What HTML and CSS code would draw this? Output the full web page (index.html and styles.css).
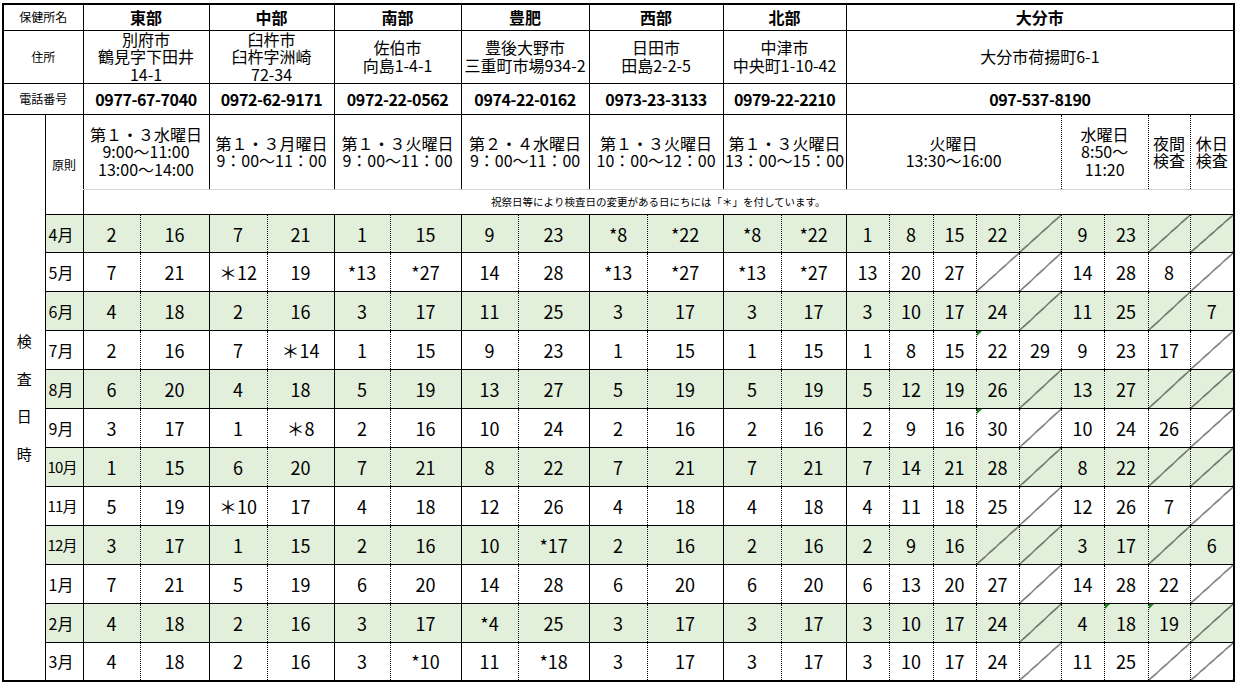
FILE: index.html
```html
<!DOCTYPE html>
<html lang="ja">
<head>
<meta charset="utf-8">
<title>検査日時</title>
<link rel="stylesheet" href="styles.css">
</head>
<body>
<table class="sched">
<colgroup>
<col class="c42"><col class="c38">
<col class="c57"><col class="c69">
<col class="c58"><col class="c67">
<col class="c56"><col class="c71">
<col class="c57"><col class="c71">
<col class="c58"><col class="c76">
<col class="c58"><col class="c65">
<col class="c43"><col class="c44"><col class="c43"><col class="c43"><col class="c42"><col class="c43"><col class="c44"><col class="c42"><col class="c44">
</colgroup>
<tr class="r1">
<th colspan="2" class="lbl">保健所名</th>
<th colspan="2" class="name">東部</th>
<th colspan="2" class="name">中部</th>
<th colspan="2" class="name">南部</th>
<th colspan="2" class="name">豊肥</th>
<th colspan="2" class="name">西部</th>
<th colspan="2" class="name">北部</th>
<th colspan="9" class="name">大分市</th>
</tr>
<tr class="r2">
<th colspan="2" class="lbl">住所</th>
<td colspan="2" class="addr">別府市<br>鶴見字下田井<br>14-1</td>
<td colspan="2" class="addr">臼杵市<br>臼杵字洲崎<br>72-34</td>
<td colspan="2" class="addr">佐伯市<br>向島1-4-1</td>
<td colspan="2" class="addr">豊後大野市<br>三重町市場934-2</td>
<td colspan="2" class="addr">日田市<br>田島2-2-5</td>
<td colspan="2" class="addr">中津市<br>中央町1-10-42</td>
<td colspan="9" class="addr">大分市荷揚町6-1</td>
</tr>
<tr class="r3">
<th colspan="2" class="lbl">電話番号</th>
<td colspan="2" class="tel">0977-67-7040</td>
<td colspan="2" class="tel">0972-62-9171</td>
<td colspan="2" class="tel">0972-22-0562</td>
<td colspan="2" class="tel">0974-22-0162</td>
<td colspan="2" class="tel">0973-23-3133</td>
<td colspan="2" class="tel">0979-22-2210</td>
<td colspan="9" class="tel">097-537-8190</td>
</tr>
<tr class="r4">
<td rowspan="14" class="vert">検<br>査<br>日<br>時</td>
<td rowspan="2" class="gen">原則</td>
<td colspan="2" class="rule">第１・３水曜日<br>9:00～11:00<br>13:00～14:00</td>
<td colspan="2" class="rule">第１・３月曜日<br>9：00～11：00</td>
<td colspan="2" class="rule">第１・３火曜日<br>9：00～11：00</td>
<td colspan="2" class="rule">第２・４水曜日<br>9：00～11：00</td>
<td colspan="2" class="rule">第１・３火曜日<br>10：00～12：00</td>
<td colspan="2" class="rule">第１・３火曜日<br>13：00～15：00</td>
<td colspan="5" class="rule">火曜日<br>13:30～16:00</td>
<td colspan="2" class="rule d">水曜日<br>8:50～<br>11:20</td>
<td class="rule d">夜間<br>検査</td>
<td class="rule d">休日<br>検査</td>
</tr>
<tr class="r5">
<td colspan="21" class="note">祝祭日等により検査日の変更がある日にちには「＊」を付しています。</td>
</tr>
<tr class="m g first">
<td class="mon">4月</td>
<td>2</td><td class="d">16</td><td>7</td><td class="d">21</td><td>1</td><td class="d">15</td><td>9</td><td class="d">23</td><td>*8</td><td class="d">*22</td><td>*8</td><td class="d">*22</td>
<td>1</td><td class="d">8</td><td class="d">15</td><td class="d">22</td><td class="d x"></td><td class="d">9</td><td class="d">23</td><td class="d x"></td><td class="d x"></td>
</tr>
<tr class="m">
<td class="mon">5月</td>
<td>7</td><td class="d">21</td><td>＊12</td><td class="d">19</td><td>*13</td><td class="d">*27</td><td>14</td><td class="d">28</td><td>*13</td><td class="d">*27</td><td>*13</td><td class="d">*27</td>
<td>13</td><td class="d">20</td><td class="d">27</td><td class="d x"></td><td class="d x"></td><td class="d">14</td><td class="d">28</td><td class="d">8</td><td class="d x"></td>
</tr>
<tr class="m g">
<td class="mon">6月</td>
<td>4</td><td class="d">18</td><td>2</td><td class="d">16</td><td>3</td><td class="d">17</td><td>11</td><td class="d">25</td><td>3</td><td class="d">17</td><td>3</td><td class="d">17</td>
<td>3</td><td class="d">10</td><td class="d">17</td><td class="d">24</td><td class="d x"></td><td class="d">11</td><td class="d">25</td><td class="d x"></td><td class="d">7</td>
</tr>
<tr class="m">
<td class="mon">7月</td>
<td>2</td><td class="d">16</td><td>7</td><td class="d">＊14</td><td>1</td><td class="d">15</td><td>9</td><td class="d">23</td><td>1</td><td class="d">15</td><td>1</td><td class="d">15</td>
<td>1</td><td class="d">8</td><td class="d">15</td><td class="d t">22</td><td class="d">29</td><td class="d">9</td><td class="d">23</td><td class="d">17</td><td class="d x"></td>
</tr>
<tr class="m g">
<td class="mon">8月</td>
<td>6</td><td class="d">20</td><td>4</td><td class="d">18</td><td>5</td><td class="d">19</td><td>13</td><td class="d">27</td><td>5</td><td class="d">19</td><td>5</td><td class="d">19</td>
<td>5</td><td class="d">12</td><td class="d">19</td><td class="d">26</td><td class="d x"></td><td class="d">13</td><td class="d">27</td><td class="d x"></td><td class="d x"></td>
</tr>
<tr class="m">
<td class="mon">9月</td>
<td>3</td><td class="d">17</td><td>1</td><td class="d">＊8</td><td>2</td><td class="d">16</td><td>10</td><td class="d">24</td><td>2</td><td class="d">16</td><td>2</td><td class="d">16</td>
<td>2</td><td class="d">9</td><td class="d">16</td><td class="d t">30</td><td class="d x"></td><td class="d">10</td><td class="d">24</td><td class="d">26</td><td class="d x"></td>
</tr>
<tr class="m g">
<td class="mon m2">10月</td>
<td>1</td><td class="d">15</td><td>6</td><td class="d">20</td><td>7</td><td class="d">21</td><td>8</td><td class="d">22</td><td>7</td><td class="d">21</td><td>7</td><td class="d">21</td>
<td>7</td><td class="d">14</td><td class="d">21</td><td class="d">28</td><td class="d x"></td><td class="d">8</td><td class="d">22</td><td class="d x"></td><td class="d x"></td>
</tr>
<tr class="m">
<td class="mon m2">11月</td>
<td>5</td><td class="d">19</td><td>＊10</td><td class="d">17</td><td>4</td><td class="d">18</td><td>12</td><td class="d">26</td><td>4</td><td class="d">18</td><td>4</td><td class="d">18</td>
<td>4</td><td class="d">11</td><td class="d">18</td><td class="d">25</td><td class="d x"></td><td class="d">12</td><td class="d">26</td><td class="d">7</td><td class="d x"></td>
</tr>
<tr class="m g">
<td class="mon m2">12月</td>
<td>3</td><td class="d">17</td><td>1</td><td class="d">15</td><td>2</td><td class="d">16</td><td>10</td><td class="d">*17</td><td>2</td><td class="d">16</td><td>2</td><td class="d">16</td>
<td>2</td><td class="d">9</td><td class="d">16</td><td class="d x"></td><td class="d x"></td><td class="d">3</td><td class="d">17</td><td class="d x"></td><td class="d">6</td>
</tr>
<tr class="m">
<td class="mon">1月</td>
<td>7</td><td class="d">21</td><td>5</td><td class="d">19</td><td>6</td><td class="d">20</td><td>14</td><td class="d">28</td><td>6</td><td class="d">20</td><td>6</td><td class="d">20</td>
<td>6</td><td class="d">13</td><td class="d">20</td><td class="d">27</td><td class="d x"></td><td class="d">14</td><td class="d">28</td><td class="d">22</td><td class="d x"></td>
</tr>
<tr class="m g">
<td class="mon">2月</td>
<td>4</td><td class="d">18</td><td>2</td><td class="d">16</td><td>3</td><td class="d">17</td><td>*4</td><td class="d">25</td><td>3</td><td class="d">17</td><td>3</td><td class="d">17</td>
<td>3</td><td class="d">10</td><td class="d">17</td><td class="d">24</td><td class="d x"></td><td class="d">4</td><td class="d t">18</td><td class="d t">19</td><td class="d x"></td>
</tr>
<tr class="m last">
<td class="mon">3月</td>
<td>4</td><td class="d">18</td><td>2</td><td class="d">16</td><td>3</td><td class="d">*10</td><td>11</td><td class="d">*18</td><td>3</td><td class="d">17</td><td>3</td><td class="d">17</td>
<td>3</td><td class="d">10</td><td class="d">17</td><td class="d">24</td><td class="d x"></td><td class="d">11</td><td class="d">25</td><td class="d x"></td><td class="d x"></td>
</tr>
</table>
</body>
</html>
```
FILE: styles.css
```css
html, body {
  margin: 0;
  padding: 0;
  background: #fff;
}
body {
  font-family: "Noto Sans CJK JP", "Noto Sans", sans-serif;
  color: #000;
}
.sched {
  border-collapse: collapse;
  table-layout: fixed;
  width: 1231px;
  margin: 3px 0 0 2px;
  border: 2px solid #000;
}
.sched td,
.sched th {
  border-top: 1px solid #000;
  border-bottom: 1px solid #000;
  border-left: 1px solid #000;
  border-right: none;
  padding: 0;
  text-align: center;
  vertical-align: middle;
  font-weight: normal;
  white-space: nowrap;
  position: relative;
}
.c42 { width: 42px; }
.c38 { width: 38px; }
.c57 { width: 57px; }
.c69 { width: 69px; }
.c58 { width: 58px; }
.c67 { width: 67px; }
.c56 { width: 56px; }
.c71 { width: 71px; }
.c76 { width: 76px; }
.c65 { width: 65px; }
.c43 { width: 43px; }
.c44 { width: 44px; }

.r1 { height: 26px; }
.r2 { height: 53px; }
.r3 { height: 31px; }
.r4 { height: 75px; }
.r5 { height: 25px; }
.m { height: 39px; }
.m.first, .m.last { height: 38px; }

.sched .lbl {
  font-size: 12px;
  line-height: 14px;
}
.sched .name {
  font-size: 16px;
  font-weight: bold;
  line-height: 18px;
}
.sched .addr {
  font-size: 16px;
  line-height: 17.5px;
}
.sched .tel {
  font-size: 16px;
  font-weight: bold;
  line-height: 18px;
  letter-spacing: -0.4px;
}
.sched .rule {
  font-size: 16px;
  line-height: 17.5px;
  border-bottom: 1px solid #d4d4d4;
}
.sched .note {
  border-top: none;
  font-size: 10.5px;
  line-height: 12px;
}
.sched .vert {
  font-size: 15px;
  line-height: 37.5px;
}
.sched .gen {
  font-size: 12px;
  line-height: 14px;
}
.m td {
  font-size: 18px;
  line-height: 20px;
}
.m .mon {
  font-size: 16px;
  text-align: left;
  padding-left: 3px;
}
.m .mon.m2 {
  font-size: 15px;
  letter-spacing: -0.8px;
  padding-left: 2px;
}
.g td {
  background-color: #e2efda;
}
.sched .d {
  border-left: 1px dotted #000;
}
.x {
  background-image: linear-gradient(to bottom right, transparent calc(50% - 0.6px), #000 calc(50% - 0.2px), #000 calc(50% + 0.2px), transparent calc(50% + 0.6px));
}
.t::before {
  content: "";
  position: absolute;
  top: 0;
  left: 0;
  border-top: 5px solid #1f8a1f;
  border-right: 5px solid transparent;
}
```
